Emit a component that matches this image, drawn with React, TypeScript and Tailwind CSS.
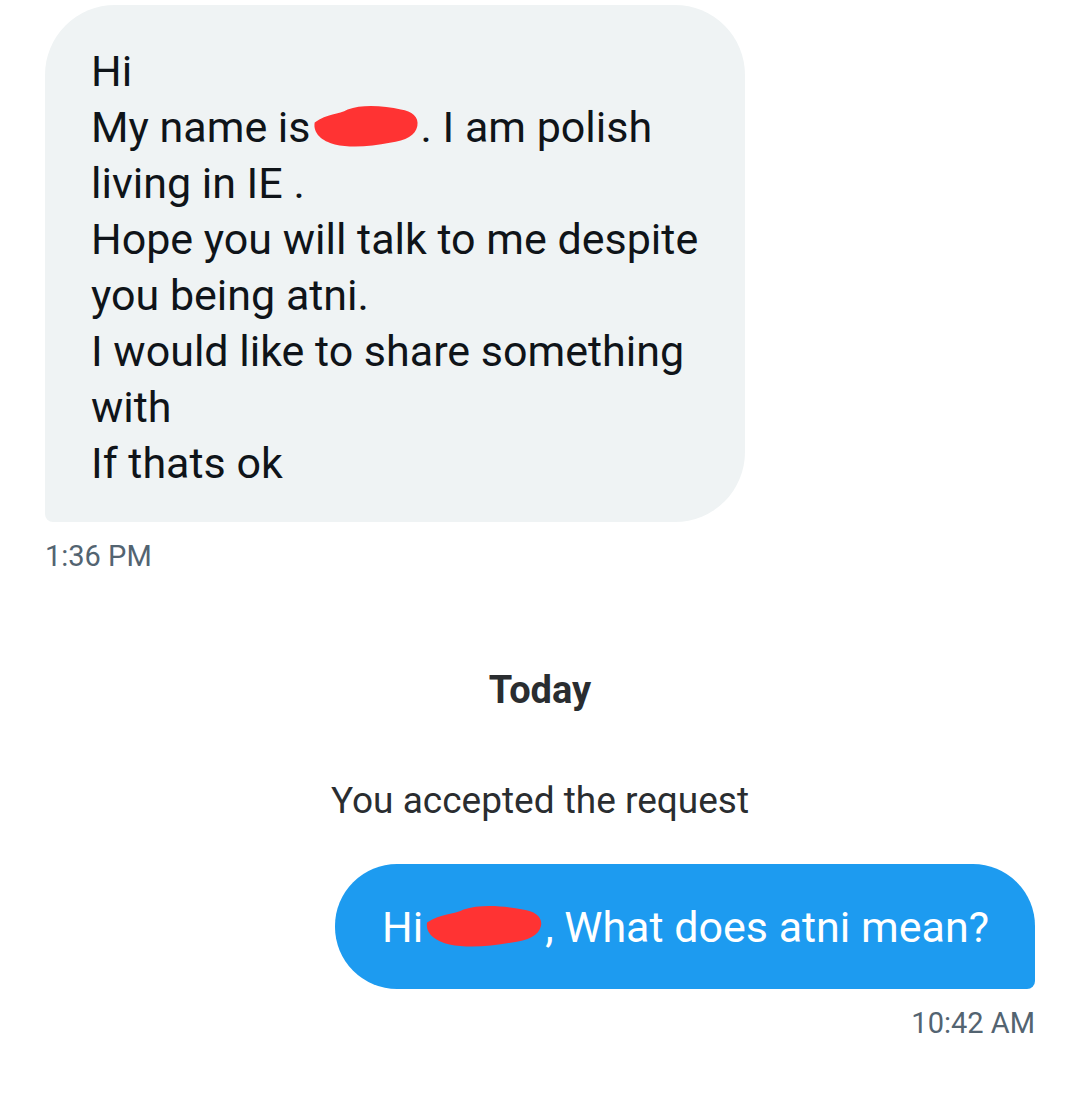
import React from 'react'

const font = { fontFamily: 'Roboto, "Liberation Sans", sans-serif' }

function Scribble({ className }: { className: string }) {
  return (
    <span className={`relative inline-block align-baseline ${className}`}>
      <svg
        viewBox="0 0 120 50"
        preserveAspectRatio="none"
        className="absolute inset-x-0 -top-[8px] h-[46px] w-full"
      >
        <path
          d="M4 20 C18 10 30 12 40 6 C56 0 80 2 98 6 C110 8 118 14 116 24 C114 34 104 40 86 42 C66 46 44 48 26 44 C12 40 2 32 4 20 Z"
          fill="#ff3333"
        />
      </svg>
    </span>
  )
}

export default function App() {
  return (
    <div className="min-h-[1109px] w-[1080px] bg-white" style={font}>
      <div className="flex flex-col px-[45px] pt-[5px]">
        <div className="w-[700px] rounded-[70px] rounded-bl-[8px] bg-[#eff3f4] pt-[38px] pb-[31px] pl-[46px] pr-[20px] text-[43px] leading-[56px] text-[#0f1419]">
          <p>Hi</p>
          <p>
            My name is
            <Scribble className="h-[30px] w-[110px]" />. I am polish
          </p>
          <p>living in IE .</p>
          <p>Hope you will talk to me despite</p>
          <p>you being atni.</p>
          <p>I would like to share something</p>
          <p>with</p>
          <p>If thats ok</p>
        </div>
        <p className="mt-[18px] text-[29px] leading-[32px] text-[#536471]">1:36 PM</p>

        <p className="mt-[96px] text-center text-[38px] leading-[44px] font-bold text-[#2a2d30]">Today</p>
        <p className="mt-[67px] text-center text-[37px] leading-[44px] text-[#2a2d30]">You accepted the request</p>

        <div className="mt-[41px] flex flex-col items-end">
          <div className="flex h-[125px] w-[700px] items-center rounded-[62px] rounded-br-[8px] bg-[#1d9bf0] pl-[47px] text-[43px] leading-[56px] text-white">
            <span>
              Hi
              <Scribble className="h-[30px] w-[122px]" />, What does atni mean?
            </span>
          </div>
          <p className="mt-[18px] text-[29px] leading-[32px] text-[#536471]">10:42 AM</p>
        </div>
      </div>
    </div>
  )
}
